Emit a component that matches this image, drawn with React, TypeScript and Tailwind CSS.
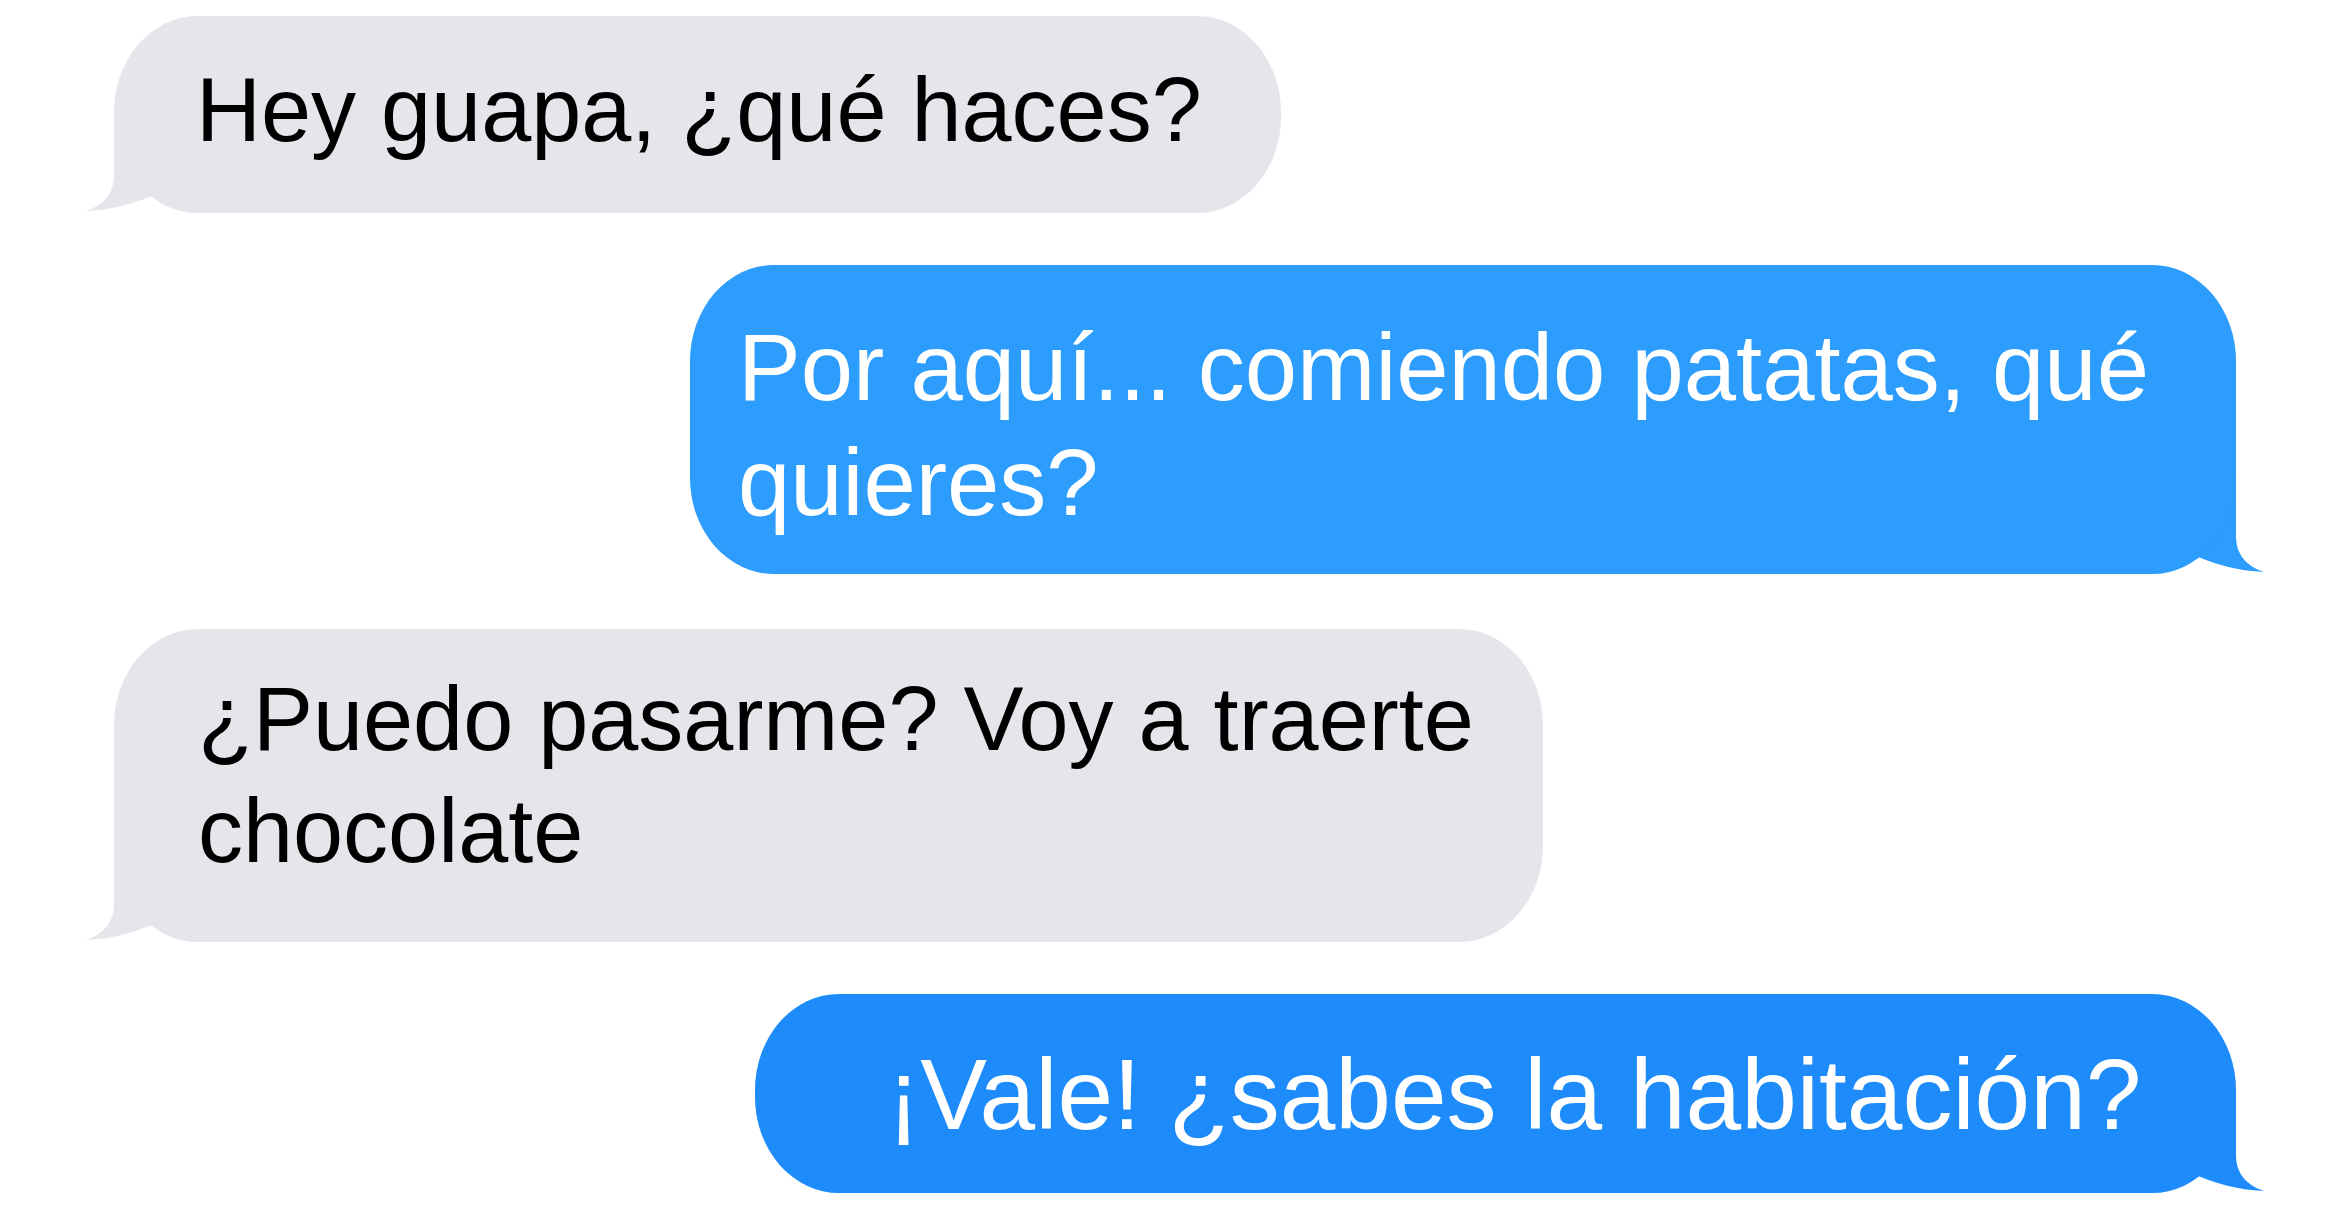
import React from "react";

function Tail({ side, color }: { side: "left" | "right"; color: string }) {
  return (
    <svg
      width="140"
      height="100"
      viewBox="0 0 140 100"
      className={
        side === "left"
          ? "absolute left-[-32px] bottom-0"
          : "absolute right-[-32px] bottom-0 -scale-x-100"
      }
    >
      <path
        d="M32 0 L32 62 C32 80 22 92 4 98 C30 97 55 90 74 81 C90 92 105 98 135 100 L140 100 L140 0 Z"
        fill={color}
      />
    </svg>
  );
}

function Bubble({
  side,
  color,
  className,
  children,
}: {
  side: "left" | "right";
  color: string;
  className: string;
  children: React.ReactNode;
}) {
  return (
    <div className={side === "left" ? "self-start relative" : "self-end relative"}>
      <div className={"relative z-10 rounded-[84px/96px] " + className}>{children}</div>
      <Tail side={side} color={color} />
    </div>
  );
}

export default function App() {
  return (
    <div
      className="w-[2350px] h-[1230px] bg-white overflow-hidden flex flex-col gap-[52px] pt-[16px] pl-[114px] pr-[114px]"
      style={{ fontFamily: '"Liberation Sans", Arial, sans-serif' }}
    >
      <Bubble
        side="left"
        color="#e6e5eb"
        className="bg-[#e6e5eb] pl-[82px] pr-[79px] pt-[37px] pb-[46px] text-black text-[90px] leading-[114px] whitespace-nowrap"
      >
        Hey guapa, ¿qué haces?
      </Bubble>

      <Bubble
        side="right"
        color="#2c9cfd"
        className="w-[1546px] bg-[#2c9cfd] pl-[48px] pr-[60px] pt-[45px] pb-[34px] text-white text-[94px] leading-[115px]"
      >
        Por aquí... comiendo patatas, qué quieres?
      </Bubble>

      <Bubble
        side="left"
        color="#e6e5eb"
        className="w-[1429px] bg-[#e6e5eb] pl-[84px] pr-[50px] pt-[34px] pb-[55px] mt-[3px] text-black text-[90px] leading-[112px]"
      >
        ¿Puedo pasarme? Voy a traerte chocolate
      </Bubble>

      <Bubble
        side="right"
        color="#1e8bfa"
        className="w-[1481px] bg-[#1e8bfa] pl-[132px] pr-[40px] pt-[43px] pb-[42px] text-white text-[100px] leading-[114px] whitespace-nowrap"
      >
        ¡Vale! ¿sabes la habitación?
      </Bubble>
    </div>
  );
}
